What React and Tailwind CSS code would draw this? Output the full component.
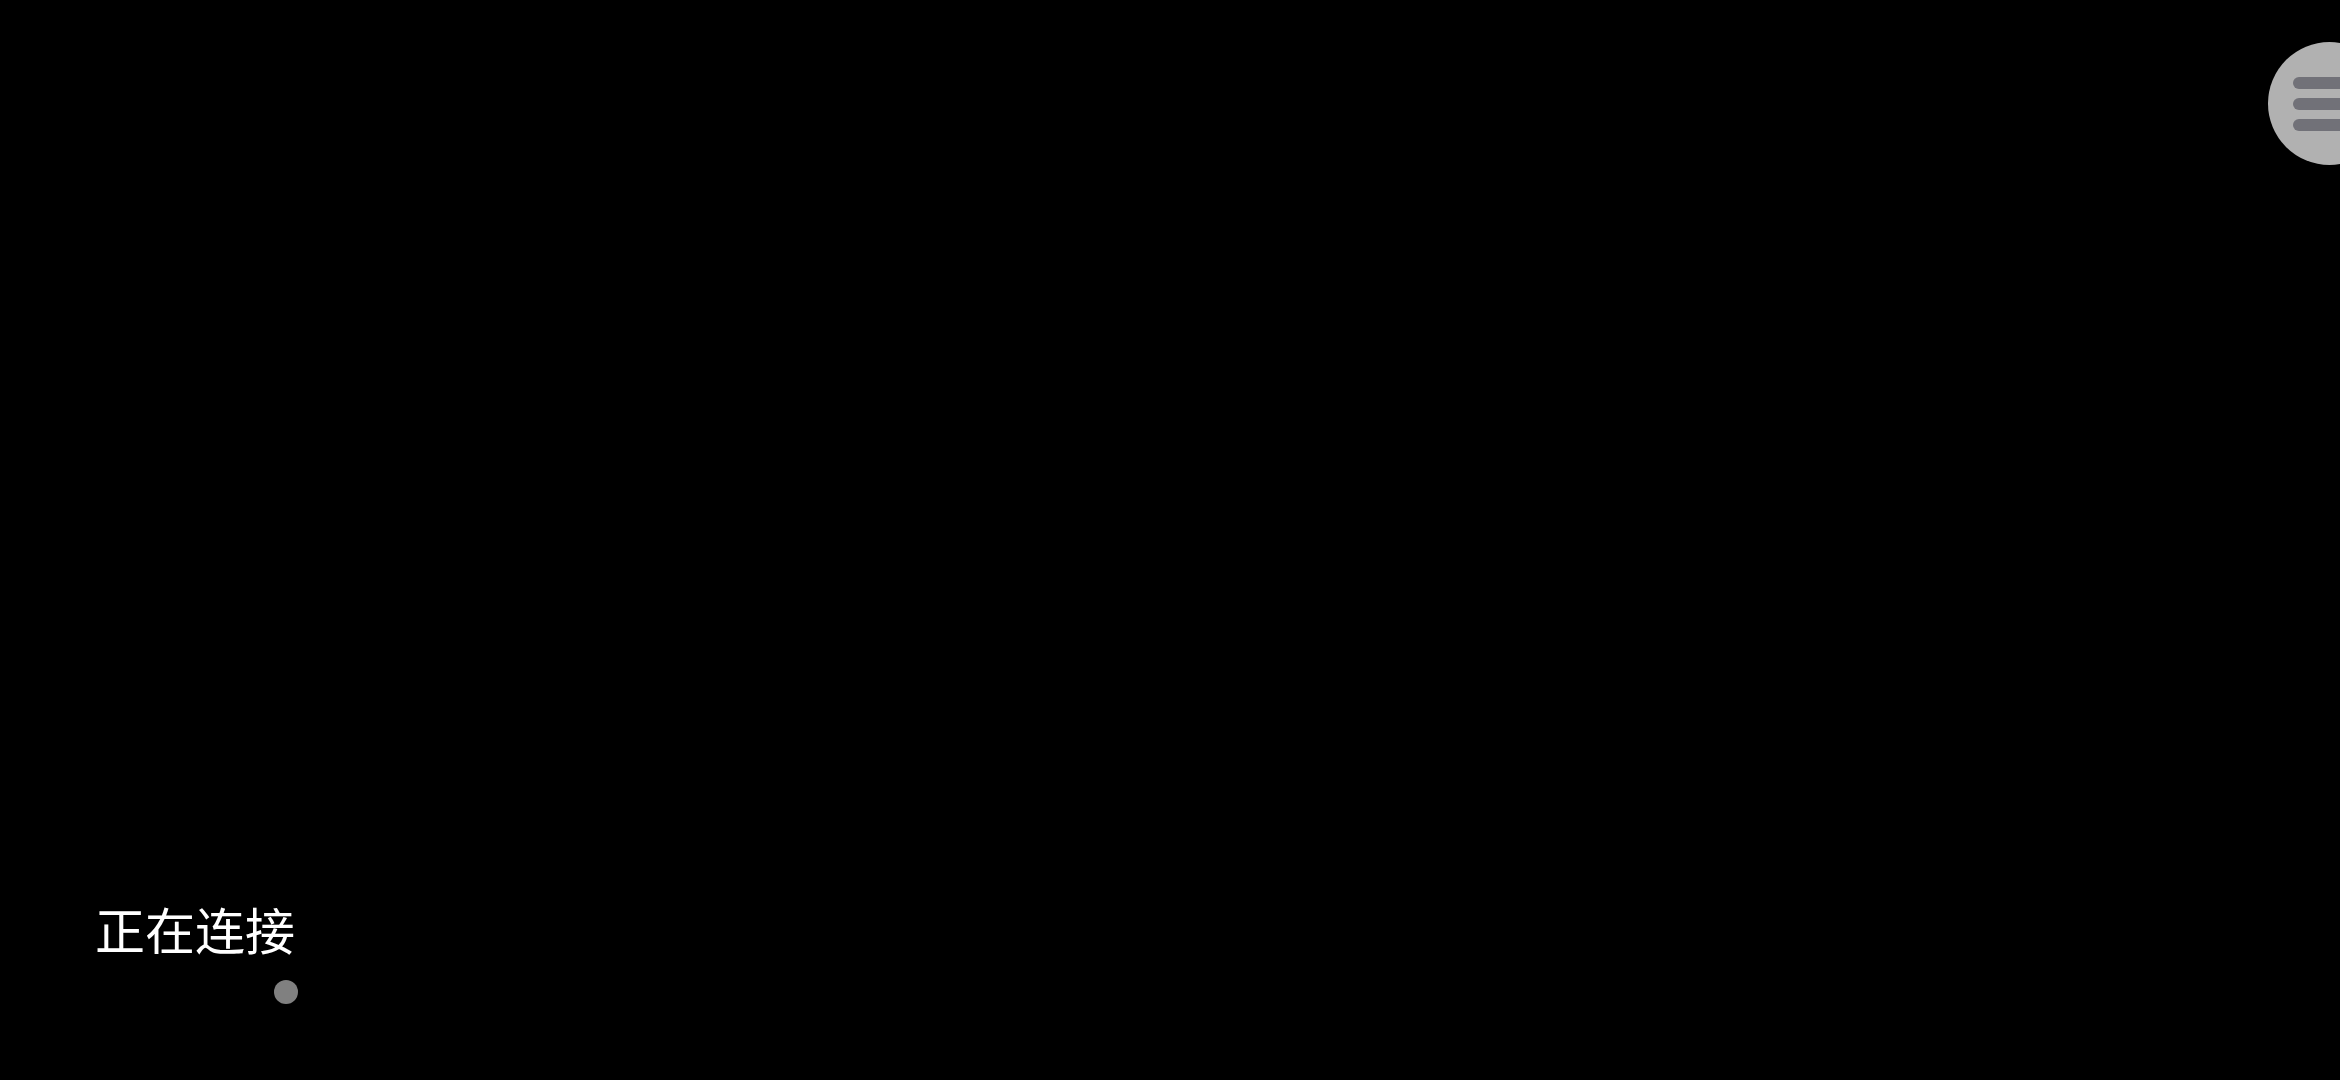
import React from 'react'

const MenuButton = () => (
  <button
    className="absolute left-[2268px] top-[42px] w-[123px] h-[123px] rounded-full bg-[#b1b1b1] flex flex-col gap-[9px] pt-[35px] pl-[25px]"
    aria-label="Menu"
  >
    <span className="block w-[70px] h-[12px] rounded-full bg-[#717178]" />
    <span className="block w-[70px] h-[12px] rounded-full bg-[#717178]" />
    <span className="block w-[70px] h-[12px] rounded-full bg-[#717178]" />
  </button>
)

export default function App() {
  return (
    <div className="relative w-full h-[1080px] bg-black overflow-hidden flex flex-col justify-end">
      <MenuButton />

      {/* Status */}
      <div className="pl-[95px] pb-[76px] flex flex-col">
        <span
          className="text-white text-[50px] leading-[50px]"
          style={{ fontFamily: '"Noto Sans CJK SC", "Noto Sans", sans-serif' }}
        >
          正在连接
        </span>
        <span className="block mt-[27px] ml-[179px] w-[24px] h-[24px] rounded-full bg-[#808080]" />
      </div>
    </div>
  )
}
